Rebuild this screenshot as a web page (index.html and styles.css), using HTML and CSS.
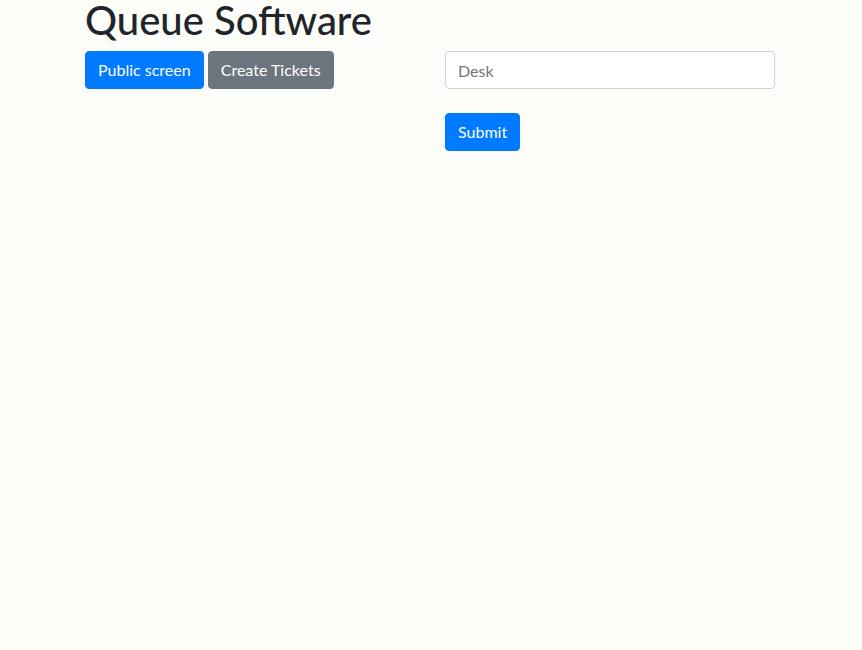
FILE: index.html
```html
<!DOCTYPE html>
<html lang="en">
<head>
<meta charset="utf-8">
<title>Queue Software</title>
<link rel="stylesheet" href="styles.css">
</head>
<body>
<div class="container">
  <h1 class="title">Queue Software</h1>
  <div class="row">
    <div class="col">
      <button class="btn btn-primary" type="button">Public screen</button>
      <button class="btn btn-secondary" type="button">Create Tickets</button>
    </div>
    <div class="col">
      <form class="desk-form">
        <div class="form-group">
          <input class="form-control" type="text" placeholder="Desk">
        </div>
        <button class="btn btn-primary" type="submit">Submit</button>
      </form>
    </div>
  </div>
</div>
</body>
</html>
```
FILE: styles.css
```css
* { box-sizing: border-box; }
html, body {
  margin: 0;
  background: #fcfcf9;
}
body {
  font-family: Lato, "Open Sans", sans-serif;
  font-size: 16px;
  line-height: 1.5;
  color: #212529;
}
.container {
  width: 720px;
  margin: 0 auto;
  padding: 0 15px;
  position: relative;
  left: -1px;
}
.title {
  margin: 0 0 10px;
  font-size: 40px;
  font-weight: 500;
  line-height: 41px;
}
.row {
  display: flex;
  margin: 0 -15px;
}
.col {
  flex: 0 0 50%;
  padding: 0 15px;
}
.btn {
  display: inline-block;
  font-family: inherit;
  font-size: 16px;
  line-height: 24px;
  padding: 6px 12px;
  border: 1px solid transparent;
  border-radius: 4px;
  color: #fff;
  cursor: pointer;
  vertical-align: middle;
}
.btn-primary { background: #007bff; border-color: #007bff; }
.btn-secondary { background: #6c757d; border-color: #6c757d; }
.form-group { margin-bottom: 24px; }
.form-control {
  display: block;
  width: 100%;
  height: 38px;
  padding: 6px 12px;
  font-family: inherit;
  font-size: 16px;
  line-height: 24px;
  color: #495057;
  background: #fff;
  border: 1px solid #ced4da;
  border-radius: 4px;
}
.form-control::placeholder { color: #6c757d; opacity: 1; }
```
